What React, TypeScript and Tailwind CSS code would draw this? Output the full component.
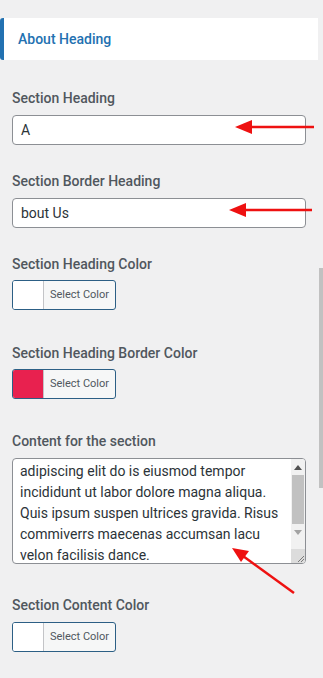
import React from "react";

const font = { fontFamily: "Roboto, 'Noto Sans', sans-serif" };

function Label({ children }: { children: React.ReactNode }) {
  return (
    <div className="text-[14px] leading-5 font-medium text-[#50575e]">{children}</div>
  );
}

function ColorButton({ swatch }: { swatch: string }) {
  return (
    <div className="flex w-[104px] h-[30px] rounded-[3px] border border-[#2c5f85] overflow-hidden bg-[#f6f7f7]">
      <div className={`w-[31px] h-full border-r border-[#c3c4c7] ${swatch}`} />
      <div className="flex-1 flex items-center justify-center text-[11px] text-[#50575e]">
        Select Color
      </div>
    </div>
  );
}

function TextInput({ value }: { value: string }) {
  return (
    <div className="w-[294px] h-[30px] rounded-[4px] border border-[#8c8f94] bg-white flex items-center px-[8px] text-[14px] text-[#2c3338]">
      {value}
    </div>
  );
}

export default function App() {
  const lines = [
    "adipiscing elit do is eiusmod tempor",
    "incididunt ut labor dolore magna aliqua.",
    "Quis ipsum suspen ultrices gravida. Risus",
    "commiverrs maecenas accumsan lacu",
    "velon facilisis dance.",
  ];

  return (
    <div className="relative min-h-[678px] w-[323px] bg-[#f0f0f1] overflow-hidden" style={font}>
      {/* Section header */}
      <div className="pt-[18px] pr-[5px]">
        <div className="h-[42px] bg-white border-l-4 border-[#2271b1] rounded-l-[3px] flex items-center pl-[14px]">
          <span className="text-[14px] font-medium text-[#2271b1]">About Heading</span>
        </div>
      </div>

      <div className="pl-[12px]">
        <div className="mt-[28px]">
          <Label>Section Heading</Label>
          <div className="mt-[7px]">
            <TextInput value="A" />
          </div>
        </div>

        <div className="mt-[26px]">
          <Label>Section Border Heading</Label>
          <div className="mt-[7px]">
            <TextInput value="bout Us" />
          </div>
        </div>

        <div className="mt-[26px]">
          <Label>Section Heading Color</Label>
          <div className="mt-[6px]">
            <ColorButton swatch="bg-white" />
          </div>
        </div>

        <div className="mt-[33px]">
          <Label>Section Heading Border Color</Label>
          <div className="mt-[6px]">
            <ColorButton swatch="bg-[#e8214f]" />
          </div>
        </div>

        <div className="mt-[32px]">
          <Label>Content for the section</Label>
          <div className="mt-[7px] relative w-[294px] h-[106px] rounded-[4px] border border-[#8c8f94] bg-white overflow-hidden">
            <div className="pl-[7px] pt-[2px] text-[14px] leading-[21px] text-[#2c3338]">
              {lines.map((l) => (
                <div key={l} className="whitespace-nowrap">{l}</div>
              ))}
            </div>
            {/* textarea scrollbar */}
            <div className="absolute right-0 top-0 bottom-0 w-[14px] bg-[#f1f1f1] flex flex-col">
              <div className="h-[16px] flex items-center justify-center">
                <div className="w-0 h-0 border-l-[4px] border-r-[4px] border-b-[5px] border-l-transparent border-r-transparent border-b-[#505050]" />
              </div>
              <div className="mx-[1px] h-[49px] bg-[#c1c1c1]" />
              <div className="h-[16px] flex items-center justify-center">
                <div className="w-0 h-0 border-l-[4px] border-r-[4px] border-t-[5px] border-l-transparent border-r-transparent border-t-[#a3a3a3]" />
              </div>
              <div className="flex-1" />
              <div className="h-[14px] bg-[#dcdcdc] flex items-end justify-end">
                <svg width="10" height="10" viewBox="0 0 10 10">
                  <line x1="9" y1="3" x2="3" y2="9" stroke="#7a7a7a" strokeWidth="1" />
                  <line x1="9" y1="6" x2="6" y2="9" stroke="#7a7a7a" strokeWidth="1" />
                </svg>
              </div>
            </div>
          </div>
        </div>

        <div className="mt-[31px]">
          <Label>Section Content Color</Label>
          <div className="mt-[7px]">
            <ColorButton swatch="bg-white" />
          </div>
        </div>
      </div>

      {/* page scrollbar thumb */}
      <div className="absolute left-[319px] top-[268px] w-[4px] h-[220px] bg-[#c1c1c1]" />

      {/* annotation arrows */}
      <svg className="absolute left-0 top-0 pointer-events-none" width="323" height="678">
        <line x1="314" y1="127" x2="248" y2="127" stroke="#ee1111" strokeWidth="2.5" />
        <polygon points="235,127 252,120 252,134" fill="#ee1111" />
        <line x1="312" y1="210" x2="242" y2="210" stroke="#ee1111" strokeWidth="2.5" />
        <polygon points="229,210 246,203 246,217" fill="#ee1111" />
        <line x1="294" y1="593" x2="243" y2="556" stroke="#ee1111" strokeWidth="2.5" />
        <polygon points="232,548 249,551 241,562" fill="#ee1111" />
      </svg>
    </div>
  );
}
